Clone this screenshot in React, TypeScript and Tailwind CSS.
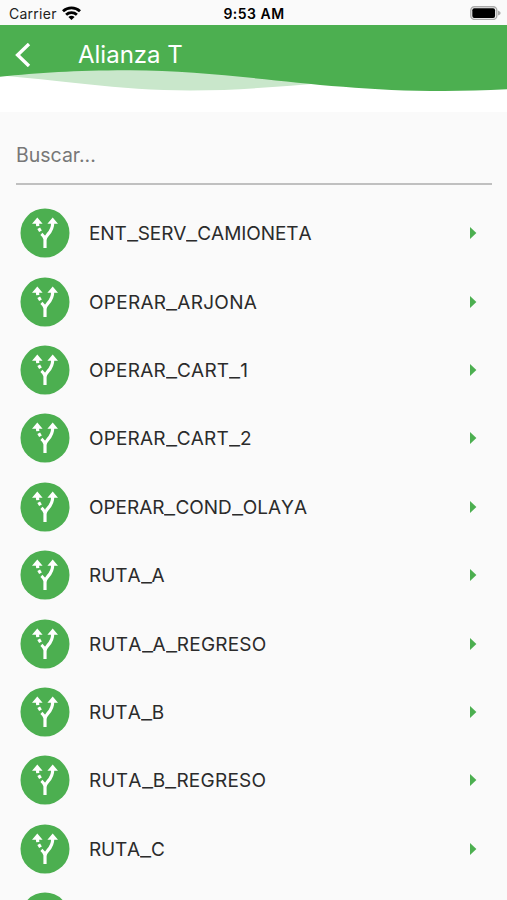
import { Fragment } from "react";

const routes = [
  { name: "ENT_SERV_CAMIONETA", tracking: "tracking-[-0.09px]" },
  { name: "OPERAR_ARJONA", tracking: "tracking-[0.28px]" },
  { name: "OPERAR_CART_1", tracking: "tracking-[0.22px]" },
  { name: "OPERAR_CART_2", tracking: "tracking-[0.18px]" },
  { name: "OPERAR_COND_OLAYA", tracking: "tracking-[-0.03px]" },
  { name: "RUTA_A", tracking: "tracking-[-0.05px]" },
  { name: "RUTA_A_REGRESO", tracking: "tracking-[0.2px]" },
  { name: "RUTA_B", tracking: "tracking-[0px]" },
  { name: "RUTA_B_REGRESO", tracking: "tracking-[0.24px]" },
  { name: "RUTA_C", tracking: "tracking-[-0.2px]" },
];

function StatusBar() {
  return (
    <div className="grid h-[25px] shrink-0 grid-cols-3 items-center pr-[6px] pl-[9px] text-black">
      <div className="flex items-center gap-[5px]">
        <span className="pt-[3px] text-[14px] leading-5 tracking-[0.018em] text-[#222]">Carrier</span>
        <svg className="h-[14px] w-[19px]" viewBox="0 0 19 14" fill="none" stroke="#000" strokeWidth="2.8">
          <path d="M1 5.3C5.8.8 13.2.8 18 5.3" />
          <path d="M4.1 8.8C7.1 6 11.9 6 14.9 8.8" />
          <path d="M6.4 10.9Q9.5 8.5 12.6 10.9L9.5 14Z" fill="#000" stroke="none" />
        </svg>
      </div>
      <span className="pt-[3px] pr-[2px] text-center text-[14px] leading-5 font-semibold tracking-[0.035em] whitespace-nowrap">
        9:53 AM
      </span>
      <svg className="mt-[1px] h-[14px] w-[31px] justify-self-end" viewBox="0 0 31 14">
        <rect x="0.8" y="0.8" width="26" height="12.6" rx="3.6" fill="#fafafa" stroke="#aaa" strokeWidth="1.4" />
        <rect x="2.3" y="2.3" width="22.8" height="9.6" rx="1.9" fill="#000" />
        <path d="M28 4.5Q30.7 5.5 30.7 7T28 9.6Z" fill="#aaa" />
      </svg>
    </div>
  );
}

function Header() {
  return (
    <header className="relative h-[87px] shrink-0 bg-white">
      <svg className="absolute inset-0 h-[87px] w-[507px]" viewBox="0 0 507 87">
        <path d="M0 50.5C50 54 120 65.5 190 65.5C240 65.5 285 61 325 58L250 40H100Z" fill="#c9e7cb" />
        <path d="M0 0H507V64.3C345 73 250 45.5 130 45.3C75 45.2 40 48 0 51.7Z" fill="#4caf50" />
      </svg>
      <div className="relative flex h-[60px] items-center pl-[15px] text-white">
        <svg className="h-6 w-4" viewBox="0 0 16 24" fill="none" stroke="currentColor" strokeWidth="3.4">
          <path d="M14 1L2.6 12L14 23" />
        </svg>
        <h1 className="ml-[47px] text-[24px] leading-8">Alianza T</h1>
      </div>
    </header>
  );
}

function RouteIcon() {
  return (
    <svg className="h-[50px] w-[50px] shrink-0" viewBox="-25 -25 50 50" fill="none" stroke="#fff" strokeWidth="3">
      <circle r="24.5" fill="#4caf50" stroke="none" />
      <path d="M0 15V7C0 1.5 7.7 .5 7.7-10" strokeWidth="3.2" />
      <path d="M0 6C-.6 3.8-1.8 2.5-3.6 .9" />
      <path d="M-7.6-10L-7.2-6.9M-6.3-4.8L-4.5-1.8" strokeWidth="3.2" />
      <path d="M-7.7-15.4L-2.4-9.3H-13ZM7.7-15.4L13-9.3H2.4Z" fill="#fff" stroke="none" />
    </svg>
  );
}

function RouteName({ name, tracking }: { name: string; tracking: string }) {
  return (
    <span className={`ml-[19px] pt-[2px] text-[19px] leading-7 whitespace-nowrap text-[#2b2b2b] [font-kerning:none] ${tracking}`}>
      {name.split("_").map((part, i) => (
        <Fragment key={i}>
          {i > 0 && <span className="inline-block w-[11px] origin-left scale-x-[1.28]">_</span>}
          {part}
        </Fragment>
      ))}
    </span>
  );
}

function RouteRow({ route }: { route?: { name: string; tracking: string } }) {
  return (
    <li className="flex h-[68.4px] shrink-0 items-center pr-[30px] pl-[20px]">
      <RouteIcon />
      {route && (
        <>
          <RouteName name={route.name} tracking={route.tracking} />
          <svg className="ml-auto h-[12px] w-[7px]" viewBox="0 0 7 12">
            <path d="M0 0L6.4 6L0 12Z" fill="#4caf50" />
          </svg>
        </>
      )}
    </li>
  );
}

export default function App() {
  return (
    <main className="flex h-[900px] w-[507px] flex-col overflow-hidden bg-[#fafafa] font-['Inter',sans-serif]">
      <StatusBar />
      <Header />
      <div className="mx-[16px] mr-[15px] flex h-[73px] shrink-0 items-center border-b-2 border-[#c0c0c0] pt-[14px]">
        <input
          className="w-full bg-transparent text-[19.5px] leading-7 outline-none placeholder:text-[#777]"
          placeholder="Buscar..."
          aria-label="Buscar"
        />
      </div>
      <ul className="flex flex-col pt-[14px]">
        {routes.map((route) => (
          <RouteRow key={route.name} route={route} />
        ))}
        <RouteRow />
      </ul>
    </main>
  );
}
